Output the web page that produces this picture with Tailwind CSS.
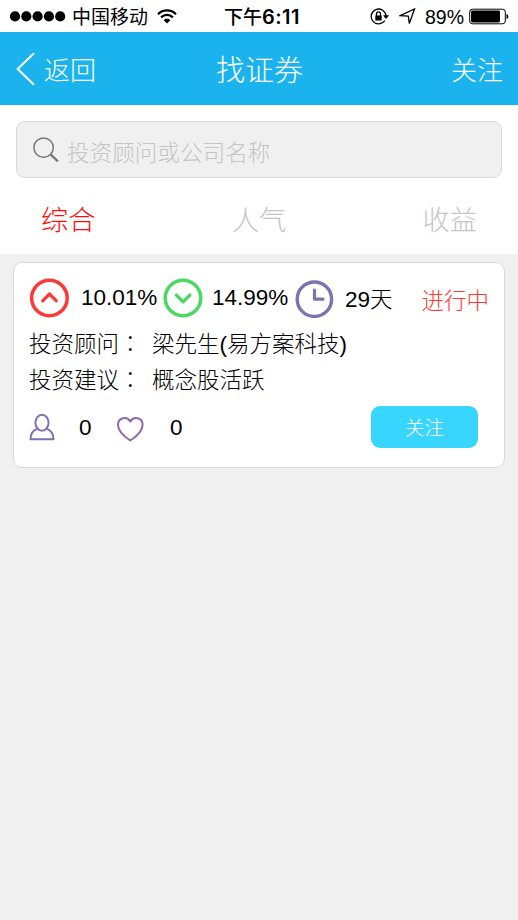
<!DOCTYPE html>
<html lang="zh-CN">
<head>
<meta charset="utf-8">
<title>找证券</title>
<script src="https://cdn.jsdelivr.net/npm/@tailwindcss/browser@4"></script>
</head>
<body class="w-[518px] h-[920px] overflow-hidden bg-[#f0f0f0] text-black font-light font-['Liberation_Sans','Noto_Sans_CJK_SC',sans-serif] whitespace-nowrap">
<!-- Status bar -->
<div class="grid grid-cols-[1fr_auto_1fr] items-center h-8 bg-white font-normal text-[19px] leading-7 font-['Inter','Noto_Sans_CJK_SC',sans-serif]">
  <div class="flex items-center pl-[10px]">
    <svg class="w-[56px] h-[12px] shrink-0" viewBox="0 0 56 12"><circle cx="5" cy="6.4" r="5.1"/><circle cx="16.3" cy="6.4" r="5.1"/><circle cx="27.6" cy="6.4" r="5.1"/><circle cx="38.9" cy="6.4" r="5.1"/><circle cx="50.2" cy="6.4" r="5.1"/></svg>
    <span class="ml-[6px] pt-[3px]">中国移动</span>
    <svg class="ml-[9px] w-5 h-[15px] shrink-0" viewBox="0 0 20 15" fill="none" stroke="#000" stroke-width="2.2"><path d="M1 5.2C6 .1 14 .1 19 5.2M4.1 8.4c3.3-3.3 8.5-3.3 11.8 0"/><path d="M6.7 11.2c1.8-1.8 4.8-1.8 6.6 0L10 14.6z" fill="#000" stroke="none"/></svg>
  </div>
  <div class="pt-[3px] pl-[6px] font-medium text-[19px]">下午<span class="font-semibold text-[20px] tracking-[0.5px]">6:11</span></div>
  <div class="flex items-center justify-end pr-[9px]">
    <svg class="w-5 h-[17px]" viewBox="0 0 20 17" fill="none" stroke="#000" stroke-width="1.3"><path d="M14.8 12.5A7.4 7.4 0 1 1 16 8"/><path d="M13 7.2h6.2L16 11z" fill="#000" stroke="none"/><rect x="5.3" y="7.5" width="6.4" height="5" fill="#000" stroke="none"/><path d="M6.5 8V5.9a2 2 0 0 1 4 0V8"/></svg>
    <svg class="ml-[9px] w-[17px] h-[17px]" viewBox="0 0 17 17" fill="none" stroke="#000" stroke-width="1.3"><path d="M1.2 7.6 15.5 1 10.3 15.5 9.3 8.2z"/></svg>
    <span class="ml-[9px] pt-[2px] text-[19.5px] font-['Liberation_Sans']">89%</span>
    <svg class="ml-[5px] w-[40px] h-[17px]" viewBox="0 0 40 17"><rect x=".7" y="1.2" width="35.6" height="14.6" rx="2.8" fill="none" stroke="#000" stroke-width="1"/><rect x="2" y="2.5" width="29" height="12" rx="1.4"/><path d="M37.5 6c2.5.5 2.5 4.5 0 5z"/></svg>
  </div>
</div>
<!-- Navigation bar -->
<header class="grid grid-cols-[1fr_auto_1fr] items-center h-[73px] bg-[#1bb3ee] text-white text-[26px] pl-4 pr-[15px]">
  <div class="flex items-center">
    <svg class="w-5 h-[34px]" viewBox="0 0 20 34" fill="none" stroke="#fff" stroke-width="2"><path d="M18 1.2 1.6 17 18 32.8"/></svg>
    <span class="ml-[8px] pt-[5px]">返回</span>
  </div>
  <h1 class="pt-[7px] text-[29px]">找证券</h1>
  <div class="pt-[5px] text-right">关注</div>
</header>
<!-- Search and sort tabs -->
<section class="bg-white h-[149px] pt-4 px-4">
  <div class="flex items-center h-[57px] w-[486px] rounded-[9px] border border-[#d8d8da] bg-[#f0f0f0] pl-4">
    <svg class="w-[27px] h-[26px]" viewBox="0 0 27 26" fill="none" stroke="#777"><circle cx="10.6" cy="10.6" r="9.7" stroke-width="1.5"/><path d="m17.6 17.4 7.3 7" stroke-width="2.2"/></svg>
    <span class="ml-[7px] pt-[9px] text-[22.6px] text-[#c4c4c4]">投资顾问或公司名称</span>
  </div>
  <div class="flex justify-between h-[76px] items-center pl-[25px] pr-[25px] pt-[10px] text-[27.3px] text-[#c5c5c5]">
    <span class="text-[#ff0c0c]">综合</span><span>人气</span><span>收益</span>
  </div>
</section>
<!-- Advisor card -->
<article class="mt-2 ml-[13px] w-[492px] h-[206px] rounded-[9px] border border-[#d9d9d9] bg-white pl-[15px] pr-[15px] pt-[15px] text-[22.5px]">
  <div class="flex items-center h-[40px]">
    <svg class="w-10 h-10 shrink-0" viewBox="0 0 40 40" fill="none" stroke="#fc3936" stroke-linecap="round" stroke-linejoin="round"><circle cx="20.4" cy="20" r="17.8" stroke-width="3.5"/><path d="m13.7 22.8 6.8-6.8 6.8 6.8" stroke-width="3.2"/></svg>
    <span class="ml-[12px] w-[82px]">10.01%</span>
    <svg class="w-10 h-10 shrink-0" viewBox="0 0 40 40" fill="none" stroke="#4bd863" stroke-linecap="round" stroke-linejoin="round"><circle cx="20" cy="20" r="17.8" stroke-width="3.5"/><path d="m13.3 17 6.8 6.8 6.8-6.8" stroke-width="3.2"/></svg>
    <span class="ml-[9px] w-[83px]">14.99%</span>
    <svg class="w-10 h-10 shrink-0" viewBox="0 0 40 40" fill="none" stroke="#7e73b0" stroke-linecap="round" stroke-linejoin="round"><circle cx="19.4" cy="21.2" r="17.2" stroke-width="3.4"/><path d="M19.5 12v9.2h8.5" stroke-width="3.2"/></svg>
    <span class="ml-[10px] pt-[4px]">29天</span>
    <span class="ml-auto pt-[7px] text-[#fc3936]">进行中</span>
  </div>
  <div class="flex h-9 items-center mt-[8px]"><span class="w-[123px]">投资顾问<span class="font-['Noto_Sans_CJK_TC']" lang="zh-TW">：</span></span><span class="pt-px">梁先生(易方案科技)</span></div>
  <div class="flex h-9 items-center"><span class="w-[123px]">投资建议<span class="font-['Noto_Sans_CJK_TC']" lang="zh-TW">：</span></span><span class="pt-px">概念股活跃</span></div>
  <div class="flex items-center mt-[8px] h-[42px]">
    <svg class="w-[26px] h-[28px]" viewBox="0 0 26 28" fill="none" stroke="#7b6fb6" stroke-width="2" stroke-linejoin="round"><ellipse cx="13" cy="9.8" rx="6.6" ry="8"/><path d="M8.5 15.6C4.5 17 1.5 20.3 1.5 26.3h23c0-6-3-9.3-7-10.7"/></svg>
    <span class="ml-[24px] w-[13px] pt-[2px]">0</span>
    <svg class="ml-[24px] w-[28px] h-[26px] mt-[3px]" viewBox="0 0 28 26" fill="none" stroke="#9068ae" stroke-width="2" stroke-linejoin="round"><path d="M14.3 24.5C7 19.8 2 14.5 2 8.7 2 1.6 11-.5 14.3 5.5 17.6-.5 26.6 1.6 26.6 8.7c0 5.8-5 11.1-12.3 15.8z"/></svg>
    <span class="ml-[26px] pt-[2px]">0</span>
    <button class="ml-auto mr-[11px] w-[107px] h-[42px] rounded-[9px] bg-[#38d6ff] pt-[3px] text-white text-[19.5px] font-light">关注</button>
  </div>
</article>
</body>
</html>
